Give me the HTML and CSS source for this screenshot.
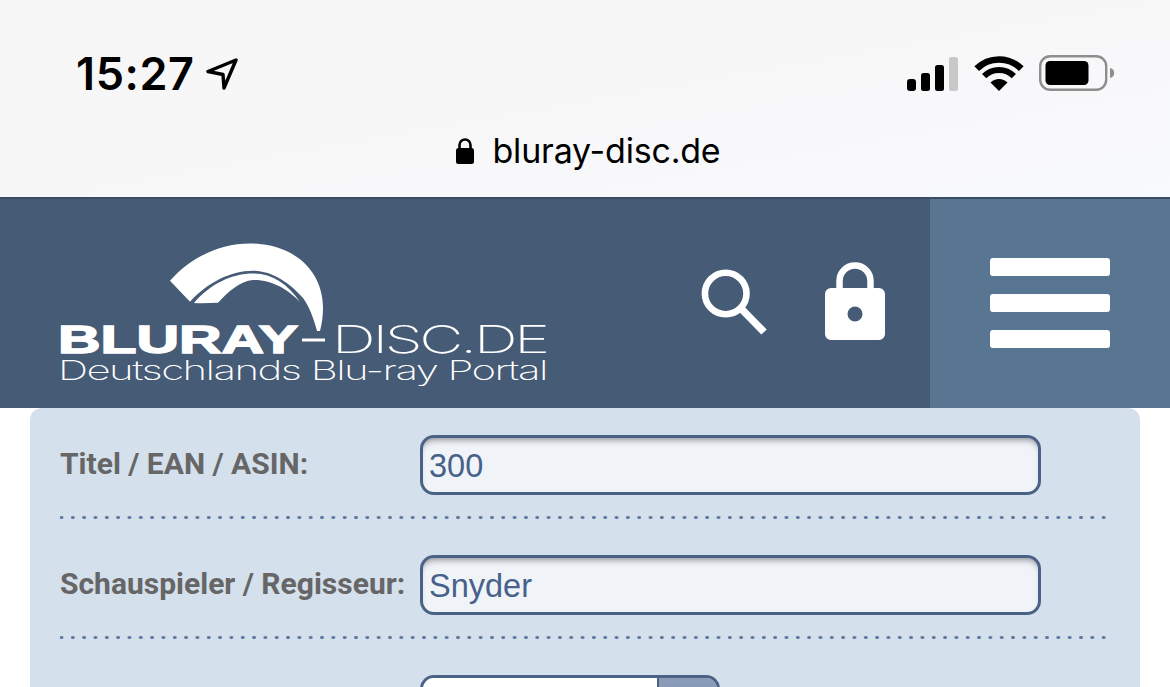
FILE: index.html
```html
<!DOCTYPE html>
<html lang="de">
<head>
<meta charset="utf-8">
<title>bluray-disc.de</title>
<link rel="stylesheet" href="styles.css">
</head>
<body>
<div class="browser">
  <div class="status">
    <div class="status-left">
      <span class="time">15:27</span>
      <svg class="loc" width="32" height="32" viewBox="0 0 32 32"><path d="M30 2 2 13.500 17 16.500 18 30Z" fill="none" stroke="#000" stroke-width="3.400" stroke-linejoin="round"/></svg>
    </div>
    <div class="status-right">
      <svg class="signal" width="51" height="34" viewBox="0 0 51 34">
        <rect x="0" y="22" width="9" height="12" rx="3"/>
        <rect x="14" y="16" width="9" height="18" rx="2.500"/>
        <rect x="28" y="8" width="9" height="26" rx="2.500"/>
        <rect class="signal-off" x="42" y="0" width="9" height="34" rx="2.500"/>
      </svg>
      <svg class="wifi" width="50" height="37" viewBox="0 0 50 37">
        <path d="M25 37 16.500 28.500a12 12 0 0 1 17 0Z"/>
        <path d="M10.150 22.150a21 21 0 0 1 29.700 0" fill="none" stroke="#000" stroke-width="6"/>
        <path d="M2.700 14.700a31.500 31.500 0 0 1 44.600 0" fill="none" stroke="#000" stroke-width="6.600"/>
      </svg>
      <svg class="battery" width="76" height="37" viewBox="0 0 76 37">
        <rect x="1.200" y="1.200" width="66" height="33.600" rx="10" fill="none" stroke="#8e8e8e" stroke-width="2.400"/>
        <rect x="6.500" y="6" width="43" height="24" rx="4.500"/>
        <path d="M71 13c3 .6 4.200 2.700 4.200 5s-1.200 4.400-4.200 5Z" fill="#8e8e8e"/>
      </svg>
    </div>
  </div>
  <div class="url">
    <svg class="url-lock" width="18" height="26" viewBox="0 0 18 26"><path d="M3.500 11V7a5.500 5.500 0 0 1 11 0v4" fill="none" stroke="#000" stroke-width="2.600"/><rect x="0" y="10" width="18" height="16" rx="2.500"/></svg>
    <span class="url-text">bluray-disc.de</span>
  </div>
</div>

<header class="site-header">
  <a class="logo" href="#" aria-label="Bluray-Disc.de">
    <svg width="500" height="150" viewBox="50 240 500 150">
      <path class="logo-shape" d="M170 280.700C190 258 219 243.500 250 243.500C293 243.500 323 270 323 308C323 316 322 323 320 331L317 331C314 319 309 306 303 298C290 283 272 270.700 253 270.700C230 270.700 207 283 190 301.700Z"/>
      <path class="logo-shape" d="M194 303C210 284 232 273.500 253 273.500C272 273.500 288 284 300 302C289 290 272 279.500 253 280C240 281 228 292 218 302.700C210 303 202 303.500 194 303Z"/>
      <text class="logo-bold" x="58" y="353" textLength="240" lengthAdjust="spacingAndGlyphs">BLURAY</text>
      <rect class="logo-shape" x="302" y="338.500" width="23" height="3"/>
      <text class="logo-thin" x="332" y="353" textLength="215" lengthAdjust="spacingAndGlyphs">DISC.DE</text>
      <text class="logo-sub" x="58" y="380" textLength="489" lengthAdjust="spacingAndGlyphs">Deutschlands Blu-ray Portal</text>
    </svg>
  </a>
  <div class="tools">
    <svg class="search" width="68" height="72" viewBox="0 0 68 72">
      <circle cx="25.700" cy="25.500" r="20.800" fill="none" stroke="#fff" stroke-width="6.600"/>
      <path d="M41 40.500 64 64" stroke="#fff" stroke-width="7.500" fill="none"/>
    </svg>
    <svg class="lock" width="60" height="78" viewBox="0 0 60 78">
      <path d="M14.500 30V19a15.500 15.500 0 0 1 31 0v11" fill="none" stroke="#fff" stroke-width="6.500"/>
      <path fill="#fff" fill-rule="evenodd" d="M6 26h48a6 6 0 0 1 6 6v40a6 6 0 0 1-6 6H6a6 6 0 0 1-6-6V32a6 6 0 0 1 6-6ZM30 44.500a7.500 7.500 0 1 0 0 15 7.500 7.500 0 0 0 0-15Z"/>
    </svg>
  </div>
  <button class="menu" aria-label="Menü">
    <span class="bar"></span>
    <span class="bar"></span>
    <span class="bar"></span>
  </button>
</header>

<main class="panel">
  <div class="row">
    <label class="label">Titel / EAN / ASIN:</label>
    <div class="input">300</div>
  </div>
  <div class="sep"></div>
  <div class="row">
    <label class="label">Schauspieler / Regisseur:</label>
    <div class="input">Snyder</div>
  </div>
  <div class="sep"></div>
  <div class="row">
    <div class="label"></div>
    <div class="select"><div class="select-value"></div><div class="select-btn"></div></div>
  </div>
</main>
</body>
</html>
```

FILE: styles.css
```css
html, body {
  margin: 0;
  padding: 0;
  height: 687px;
  overflow: hidden;
  background: #fff;
  font-family: "Roboto", "Liberation Sans", sans-serif;
}

.browser {
  height: 197px;
  background: linear-gradient(170deg, #f6f6f6 0%, #f7f7f8 50%, #f9fafe 100%);
  display: flex;
  flex-direction: column;
}

.status {
  height: 44px;
  margin-top: 52px;
  padding: 0 55px 0 76px;
  display: flex;
  justify-content: space-between;
  align-items: center;
}

.status-left {
  display: flex;
  align-items: center;
  gap: 11px;
}

.time {
  font-family: "Inter", "Liberation Sans", sans-serif;
  font-size: 45px;
  font-weight: 600;
  line-height: 44px;
  letter-spacing: 0.600px;
  color: #000;
}

.status-right {
  display: flex;
  align-items: flex-end;
  align-self: flex-start;
  gap: 15px;
  height: 37px;
  margin-top: 2px;
}

.signal-off { fill: #c8c8c8; }
.wifi { margin-left: 1px; }
.battery { margin-bottom: -1px; }

.url {
  margin-top: 35px;
  height: 40px;
  display: flex;
  justify-content: center;
  align-items: center;
  gap: 18px;
  padding-left: 7px;
}

.url-text {
  font-family: "Inter", "Liberation Sans", sans-serif;
  font-size: 34px;
  line-height: 40px;
  letter-spacing: -0.200px;
  color: #000;
}

.site-header {
  height: 209px;
  border-top: 2px solid #3a4c63;
  display: flex;
  background: #465b75;
  box-sizing: content-box;
}

.logo {
  display: block;
  margin: 41px 0 0 50px;
  width: 500px;
  height: 150px;
}

.logo-shape { fill: #fff; }

.logo-bold {
  font-family: "Liberation Sans", sans-serif;
  font-weight: 700;
  font-size: 38px;
  fill: #fff;
  stroke: #fff;
  stroke-width: 1.400px;
}

.logo-thin {
  font-family: "Inter", "Liberation Sans", sans-serif;
  font-weight: 200;
  font-size: 38px;
  letter-spacing: -2px;
  fill: #fff;
}

.logo-sub {
  font-family: "Inter", "Liberation Sans", sans-serif;
  font-weight: 200;
  font-size: 27px;
  letter-spacing: -1px;
  fill: #fff;
}

.tools {
  flex: 1;
  display: flex;
  align-items: flex-start;
  justify-content: flex-end;
  gap: 57px;
  padding: 63px 45px 0 0;
}

.search { margin-top: 6px; }

.menu {
  width: 240px;
  padding: 59px 60px 0;
  border: 0;
  background: #587592;
  display: flex;
  flex-direction: column;
  gap: 18px;
  align-items: stretch;
  justify-content: flex-start;
}

.bar {
  display: block;
  height: 18px;
  border-radius: 3px;
  background: #fff;
}

.panel {
  margin: 0 30px;
  height: 279px;
  padding: 27px 33px 0 30px;
  box-sizing: border-box;
  background: #d4e0ec;
  border-radius: 12px 12px 0 0;
  overflow: hidden;
}

.row {
  height: 60px;
  display: flex;
  align-items: center;
}

.label {
  width: 360px;
  flex: none;
  font-size: 30px;
  font-weight: 700;
  color: #666;
  position: relative;
  top: -2px;
}

.input {
  width: 621px;
  height: 60px;
  box-sizing: border-box;
  padding: 0 6px;
  border: 3px solid #4a6285;
  border-radius: 14px;
  background: #f0f4f9;
  box-shadow: inset 0 6px 6px -4px rgba(60, 60, 60, .55);
  font-family: "Liberation Sans", sans-serif;
  font-size: 32.500px;
  line-height: 56px;
  color: #47618a;
}

.sep {
  height: 3px;
  margin: 21px 0 36px;
  background: radial-gradient(circle at center, #6079a0 1.500px, transparent 2px) -4.200px 0 / 11.330px 3px repeat-x;
}

.select {
  width: 300px;
  height: 60px;
  flex: none;
  box-sizing: border-box;
  display: flex;
  border: 3px solid #4a6285;
  border-radius: 14px;
  overflow: hidden;
}

.select-value {
  flex: 1;
  background: #fff;
  border-right: 2px solid #4a6285;
}

.select-btn {
  width: 58px;
  background: linear-gradient(#8a9cb8, #7a8fae);
}
```
